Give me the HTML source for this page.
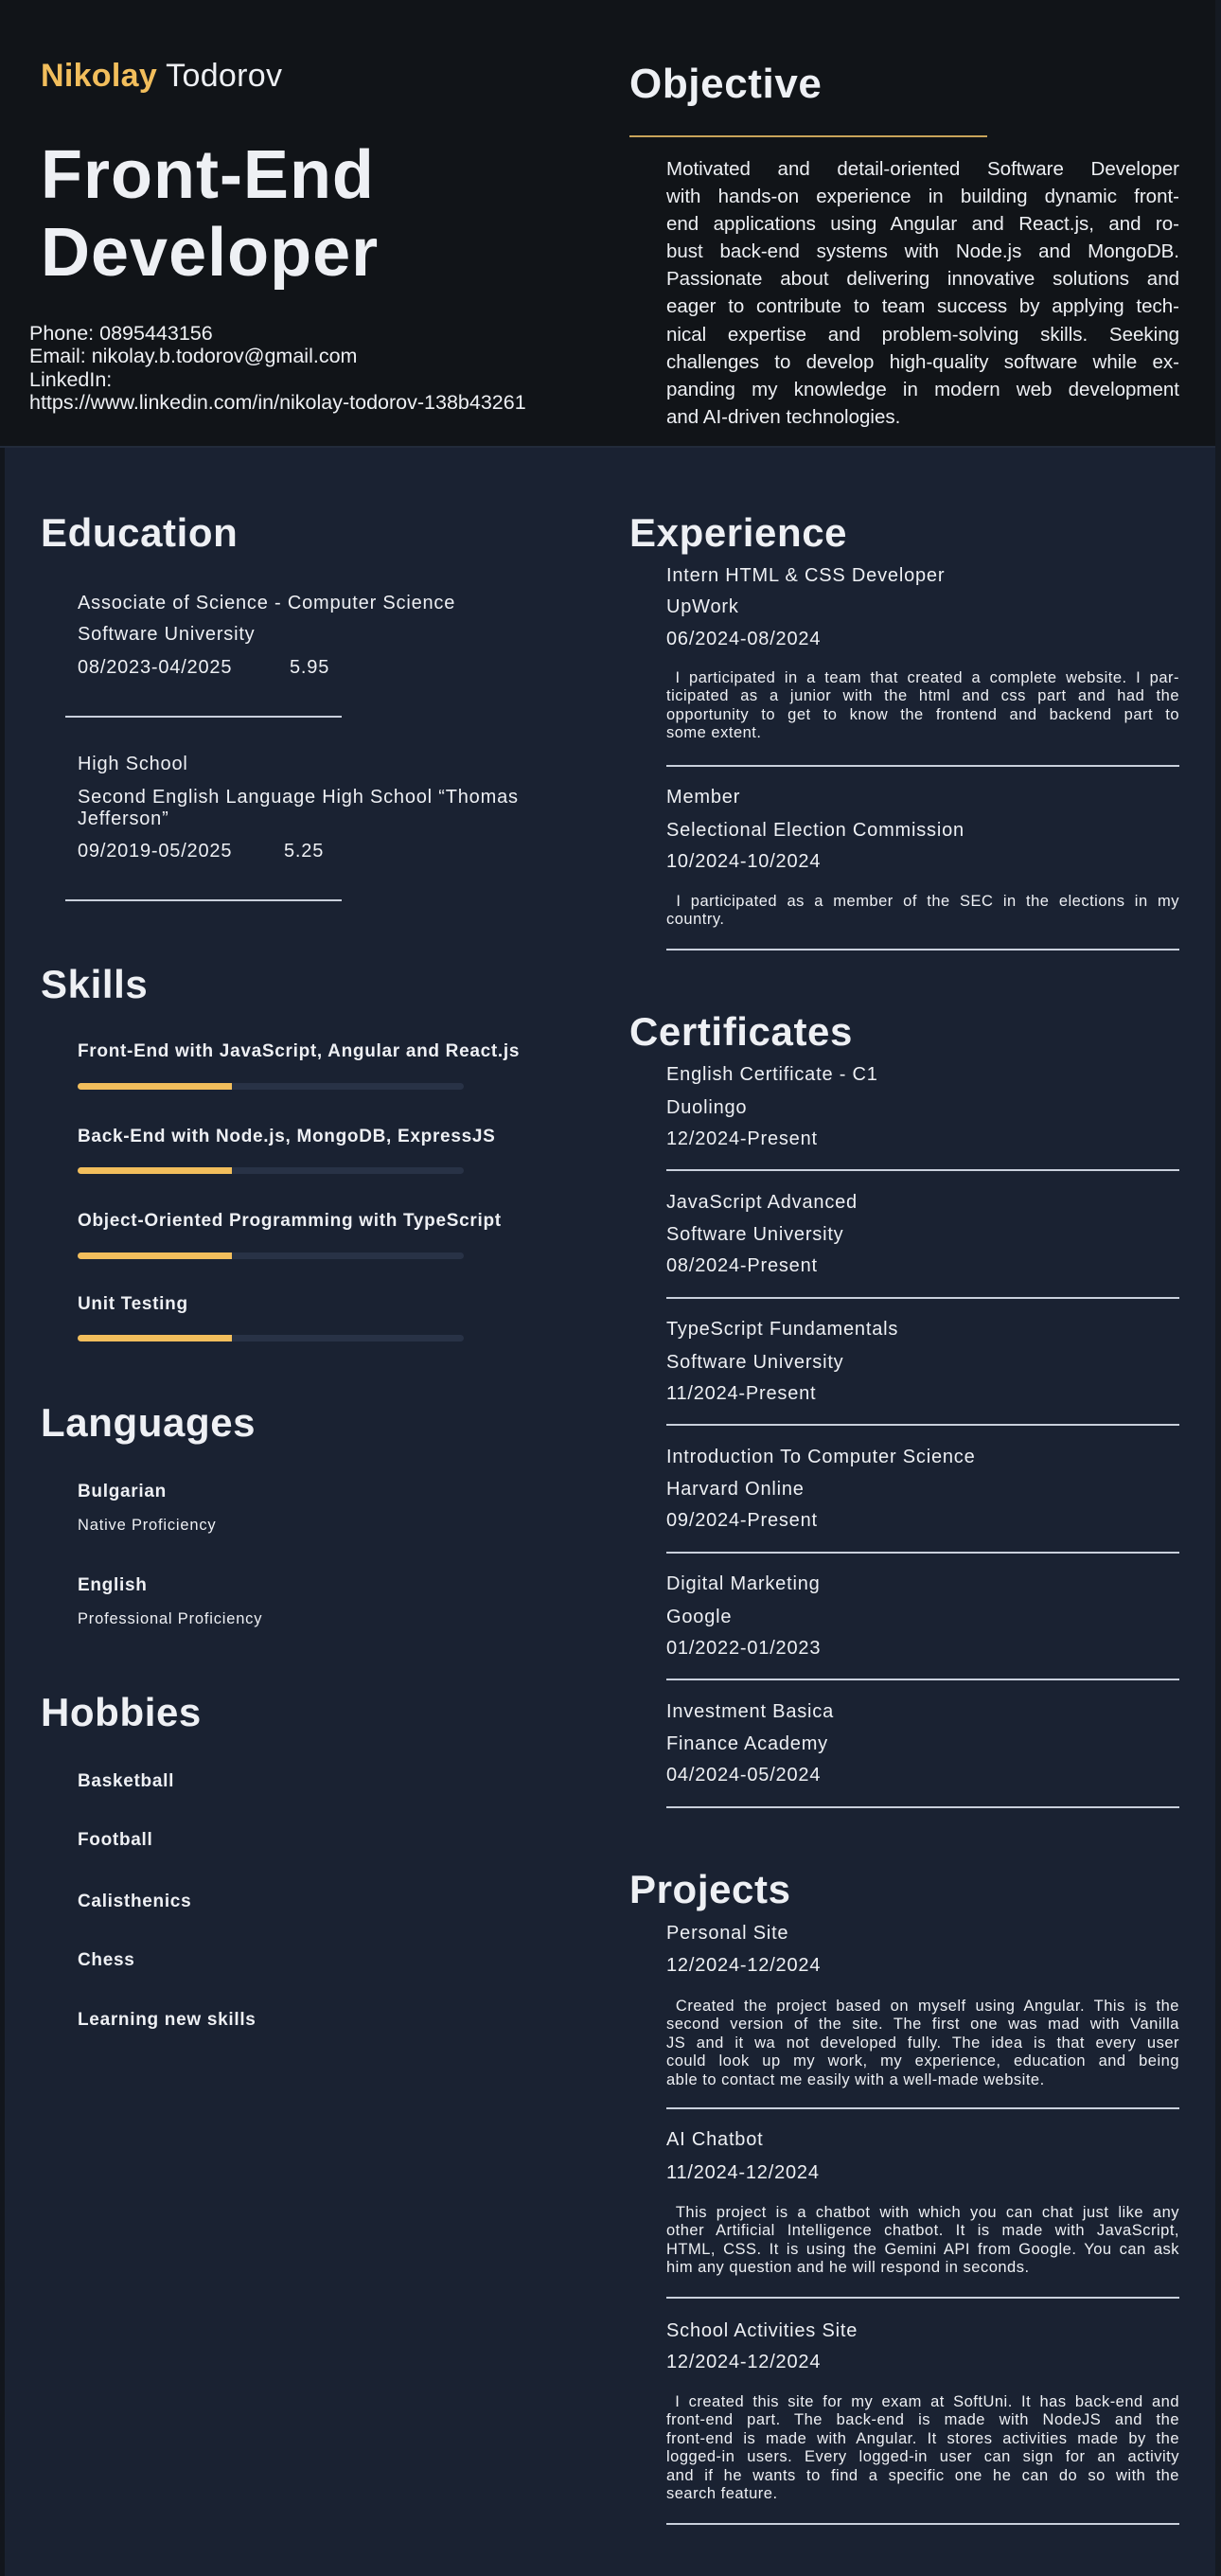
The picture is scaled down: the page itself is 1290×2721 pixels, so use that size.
<!DOCTYPE html>
<html><head><meta charset="utf-8">
<style>
*{margin:0;padding:0;box-sizing:border-box}
html,body{width:1290px;height:2721px;overflow:hidden}
body{background:#1a2232;color:#eef0f4;font-family:"Liberation Sans",sans-serif;position:relative}
.hdr{position:absolute;left:0;top:0;width:1290px;height:473px;background:#111418;border-bottom:2px solid #222b3a}
.ls{position:absolute;left:0;top:473px;width:5px;height:2248px;background:#12161d}
.rs{position:absolute;left:1284px;top:0;width:6px;height:2721px;background:#151a22}
.t{position:absolute;white-space:nowrap;line-height:30px;height:30px;font-size:20px;letter-spacing:0.8px}
.h{position:absolute;white-space:nowrap;font-weight:bold;font-size:42px;line-height:50px;height:50px;letter-spacing:0.6px}
.b{font-weight:bold;font-size:19px;letter-spacing:0.7px}
.d{position:absolute;left:704px;width:542px;font-size:16.5px;line-height:19.4px;letter-spacing:0.5px}
.d div{text-align:justify;text-align-last:justify;white-space:nowrap;overflow:visible}
.d div.l{text-align-last:left}
.o{position:absolute;left:704px;width:542px;font-size:20.5px;line-height:29.1px;top:164px}
.o div{text-align:justify;text-align-last:justify;white-space:nowrap}
.o div.l{text-align-last:left}
.ln{position:absolute;height:2px;background:#c9d0dc}
.bar{position:absolute;left:82px;width:408px;height:7px;background:#283246;border-radius:4px}
.bar i{position:absolute;left:0;top:0;width:163px;height:7px;background:#f2be5c;border-radius:4px 0 0 4px}
</style></head><body>
<div class="hdr"></div>
<div class="ls"></div>
<div class="rs"></div>

<div class="t" style="left:43px;top:60px;height:40px;line-height:40px;font-size:34px;letter-spacing:0.3px"><b style="color:#f2be5c">Nikolay</b> Todorov</div>
<div class="h" style="left:43px;top:144px;font-size:72px;line-height:82px;height:164px;letter-spacing:1px">Front-End<br>Developer</div>
<div style="position:absolute;left:31px;top:340px;font-size:21.5px;line-height:24.4px">Phone: 0895443156<br>Email: nikolay.b.todorov@gmail.com<br>LinkedIn:<br>https://www.linkedin.com/in/nikolay-todorov-138b43261</div>

<div class="h" style="left:665px;top:64px;font-size:44px">Objective</div>
<div class="ln" style="left:665px;top:143px;width:378px;background:#c9a45a"></div>
<div class="o">
<div>Motivated and detail-oriented Software Developer</div>
<div>with hands-on experience in building dynamic front-</div>
<div>end applications using Angular and React.js, and ro-</div>
<div>bust back-end systems with Node.js and MongoDB.</div>
<div>Passionate about delivering innovative solutions and</div>
<div>eager to contribute to team success by applying tech-</div>
<div>nical expertise and problem-solving skills. Seeking</div>
<div>challenges to develop high-quality software while ex-</div>
<div>panding my knowledge in modern web development</div>
<div class="l">and AI-driven technologies.</div>
</div>

<div class="h" style="left:43px;top:538px">Education</div>
<div class="t" style="left:82px;top:622px">Associate of Science - Computer Science</div>
<div class="t" style="left:82px;top:655px">Software University</div>
<div class="t" style="left:82px;top:690px">08/2023-04/2025</div>
<div class="t" style="left:306px;top:690px">5.95</div>
<div class="ln" style="left:69px;top:756px;width:292px"></div>
<div class="t" style="left:82px;top:792px">High School</div>
<div class="t" style="left:82px;top:827px">Second English Language High School “Thomas</div>
<div class="t" style="left:82px;top:850px">Jefferson”</div>
<div class="t" style="left:82px;top:884px">09/2019-05/2025</div>
<div class="t" style="left:300px;top:884px">5.25</div>
<div class="ln" style="left:69px;top:950px;width:292px"></div>

<div class="h" style="left:43px;top:1015px">Skills</div>
<div class="t b" style="left:82px;top:1096px">Front-End with JavaScript, Angular and React.js</div>
<div class="bar" style="top:1144px"><i></i></div>
<div class="t b" style="left:82px;top:1186px">Back-End with Node.js, MongoDB, ExpressJS</div>
<div class="bar" style="top:1233px"><i></i></div>
<div class="t b" style="left:82px;top:1275px">Object-Oriented Programming with TypeScript</div>
<div class="bar" style="top:1323px"><i></i></div>
<div class="t b" style="left:82px;top:1363px">Unit Testing</div>
<div class="bar" style="top:1410px"><i></i></div>

<div class="h" style="left:43px;top:1478px">Languages</div>
<div class="t b" style="left:82px;top:1561px">Bulgarian</div>
<div class="t" style="left:82px;top:1596px;font-size:16.5px">Native Proficiency</div>
<div class="t b" style="left:82px;top:1660px">English</div>
<div class="t" style="left:82px;top:1695px;font-size:16.5px">Professional Proficiency</div>

<div class="h" style="left:43px;top:1784px">Hobbies</div>
<div class="t b" style="left:82px;top:1867px">Basketball</div>
<div class="t b" style="left:82px;top:1929px">Football</div>
<div class="t b" style="left:82px;top:1994px">Calisthenics</div>
<div class="t b" style="left:82px;top:2056px">Chess</div>
<div class="t b" style="left:82px;top:2119px">Learning new skills</div>

<div class="h" style="left:665px;top:538px">Experience</div>
<div class="t" style="left:704px;top:593px">Intern HTML &amp; CSS Developer</div>
<div class="t" style="left:704px;top:626px">UpWork</div>
<div class="t" style="left:704px;top:660px">06/2024-08/2024</div>
<div class="d" style="top:707px">
<div>&nbsp;I participated in a team that created a complete website. I par-</div>
<div>ticipated as a junior with the html and css part and had the</div>
<div>opportunity to get to know the frontend and backend part to</div>
<div class="l">some extent.</div>
</div>
<div class="ln" style="left:704px;top:808px;width:542px"></div>
<div class="t" style="left:704px;top:827px">Member</div>
<div class="t" style="left:704px;top:862px">Selectional Election Commission</div>
<div class="t" style="left:704px;top:895px">10/2024-10/2024</div>
<div class="d" style="top:943px">
<div>&nbsp;I participated as a member of the SEC in the elections in my</div>
<div class="l">country.</div>
</div>
<div class="ln" style="left:704px;top:1002px;width:542px"></div>

<div class="h" style="left:665px;top:1065px">Certificates</div>
<div class="t" style="left:704px;top:1120px">English Certificate - C1</div>
<div class="t" style="left:704px;top:1155px">Duolingo</div>
<div class="t" style="left:704px;top:1188px">12/2024-Present</div>
<div class="ln" style="left:704px;top:1235px;width:542px"></div>
<div class="t" style="left:704px;top:1255px">JavaScript Advanced</div>
<div class="t" style="left:704px;top:1289px">Software University</div>
<div class="t" style="left:704px;top:1322px">08/2024-Present</div>
<div class="ln" style="left:704px;top:1370px;width:542px"></div>
<div class="t" style="left:704px;top:1389px">TypeScript Fundamentals</div>
<div class="t" style="left:704px;top:1424px">Software University</div>
<div class="t" style="left:704px;top:1457px">11/2024-Present</div>
<div class="ln" style="left:704px;top:1504px;width:542px"></div>
<div class="t" style="left:704px;top:1524px">Introduction To Computer Science</div>
<div class="t" style="left:704px;top:1558px">Harvard Online</div>
<div class="t" style="left:704px;top:1591px">09/2024-Present</div>
<div class="ln" style="left:704px;top:1639px;width:542px"></div>
<div class="t" style="left:704px;top:1658px">Digital Marketing</div>
<div class="t" style="left:704px;top:1693px">Google</div>
<div class="t" style="left:704px;top:1726px">01/2022-01/2023</div>
<div class="ln" style="left:704px;top:1773px;width:542px"></div>
<div class="t" style="left:704px;top:1793px">Investment Basica</div>
<div class="t" style="left:704px;top:1827px">Finance Academy</div>
<div class="t" style="left:704px;top:1860px">04/2024-05/2024</div>
<div class="ln" style="left:704px;top:1908px;width:542px"></div>

<div class="h" style="left:665px;top:1971px">Projects</div>
<div class="t" style="left:704px;top:2027px">Personal Site</div>
<div class="t" style="left:704px;top:2061px">12/2024-12/2024</div>
<div class="d" style="top:2110px">
<div>&nbsp;Created the project based on myself using Angular. This is the</div>
<div>second version of the site. The first one was mad with Vanilla</div>
<div>JS and it wa not developed fully. The idea is that every user</div>
<div>could look up my work, my experience, education and being</div>
<div class="l">able to contact me easily with a well-made website.</div>
</div>
<div class="ln" style="left:704px;top:2226px;width:542px"></div>
<div class="t" style="left:704px;top:2245px">AI Chatbot</div>
<div class="t" style="left:704px;top:2280px">11/2024-12/2024</div>
<div class="d" style="top:2328px">
<div>&nbsp;This project is a chatbot with which you can chat just like any</div>
<div>other Artificial Intelligence chatbot. It is made with JavaScript,</div>
<div>HTML, CSS. It is using the Gemini API from Google. You can ask</div>
<div class="l">him any question and he will respond in seconds.</div>
</div>
<div class="ln" style="left:704px;top:2426px;width:542px"></div>
<div class="t" style="left:704px;top:2447px">School Activities Site</div>
<div class="t" style="left:704px;top:2480px">12/2024-12/2024</div>
<div class="d" style="top:2528px">
<div>&nbsp;I created this site for my exam at SoftUni. It has back-end and</div>
<div>front-end part. The back-end is made with NodeJS and the</div>
<div>front-end is made with Angular. It stores activities made by the</div>
<div>logged-in users. Every logged-in user can sign for an activity</div>
<div>and if he wants to find a specific one he can do so with the</div>
<div class="l">search feature.</div>
</div>
<div class="ln" style="left:704px;top:2665px;width:542px"></div>
</body></html>
